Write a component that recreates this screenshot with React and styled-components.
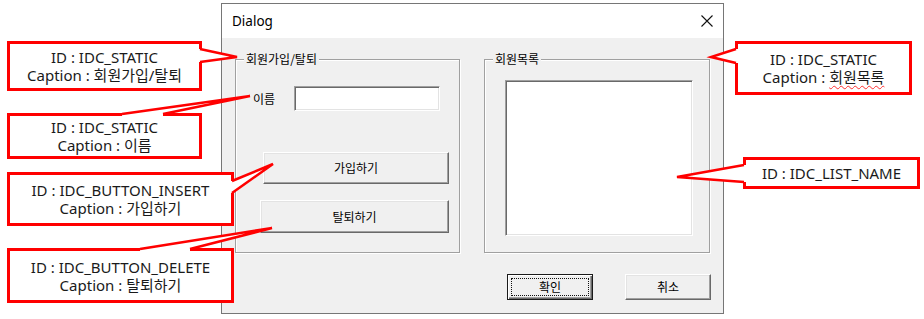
import React from "react";
import styled, { createGlobalStyle, css } from "styled-components";

const GlobalStyle = createGlobalStyle`
  html, body { margin: 0; padding: 0; background: #ffffff; }
  body { font-family: "Noto Sans", "Noto Sans CJK KR", sans-serif; }
`;

const Canvas = styled.div`
  position: relative;
  width: 924px;
  height: 319px;
  box-sizing: border-box;
  padding: 3px 0 0 221px;
  overflow: hidden;
`;

const Dialog = styled.div`
  width: 503px;
  height: 311px;
  box-sizing: border-box;
  border: 1px solid #767676;
  background: #f0f0f0;
  display: flex;
  flex-direction: column;
`;

const TitleBar = styled.div`
  height: 34px;
  flex: none;
  background: #ffffff;
  display: flex;
  align-items: center;
  justify-content: space-between;
  padding: 0 10px 0 10px;
  font-family: "Noto Sans", sans-serif;
  font-size: 13.5px;
  color: #000;
`;

const DialogBody = styled.div`
  padding: 21px 12px 0 13px;
  display: flex;
  flex-direction: column;
  font-family: "Noto Sans CJK KR", "Noto Sans", sans-serif;
  font-size: 12px;
  font-weight: 400;
  color: #000;
`;

const GroupRow = styled.div`
  display: flex;
  gap: 24px;
`;

const Group = styled.div`
  position: relative;
  box-sizing: border-box;
  width: ${(p) => p.$w}px;
  height: 194px;
  border: 1px solid #a0a0a0;
  box-shadow: 1px 1px 0 #ffffff, inset 1px 1px 0 #ffffff;
  display: flex;
  flex-direction: column;
  align-items: flex-start;
`;

const GroupCaption = styled.span`
  position: absolute;
  top: -9px;
  left: 8px;
  padding: 0 2px;
  background: #f0f0f0;
  line-height: 16px;
`;

const NameRow = styled.div`
  margin: 26px 0 0 17px;
  display: flex;
  align-items: center;
  gap: 19px;
`;

const Label = styled.span`
  line-height: 16px;
`;

const sunken = css`
  box-sizing: border-box;
  background: #ffffff;
  border: 1px solid;
  border-color: #a0a0a0 #ffffff #ffffff #a0a0a0;
  box-shadow: inset 1px 1px 0 #696969, inset -1px -1px 0 #e3e3e3;
`;

const EditBox = styled.div`
  ${sunken};
  width: 146px;
  height: 25px;
`;

const ListBox = styled.div`
  ${sunken};
  margin: 20px 0 0 20px;
  width: 188px;
  height: 156px;
`;

const Button = styled.div`
  position: relative;
  box-sizing: border-box;
  width: ${(p) => p.$w}px;
  height: ${(p) => p.$h}px;
  margin: ${(p) => p.$m || "0"};
  background: #f0f0f0;
  display: flex;
  align-items: center;
  justify-content: center;
  font-size: 12px;
  line-height: 16px;
  color: #000;
  border: 1px solid;
  border-color: #ffffff #696969 #696969 #ffffff;
  box-shadow: inset -1px -1px 0 #a0a0a0, inset 1px 1px 0 #e3e3e3;
  ${(p) =>
    p.$default &&
    css`
      border: 1px solid #1a1a1a;
      box-shadow: inset 1px 1px 0 #ffffff, inset -1px -1px 0 #696969,
        inset -2px -2px 0 #a0a0a0;
      &::after {
        content: "";
        position: absolute;
        inset: 3px;
        border: 1px dotted #111;
      }
    `}
`;

const ButtonRow = styled.div`
  margin-top: 21px;
  display: flex;
  justify-content: flex-end;
  gap: 32px;
`;

const Callout = styled.div`
  position: absolute;
  left: ${(p) => p.$x}px;
  top: ${(p) => p.$y}px;
  width: ${(p) => p.$w}px;
  height: ${(p) => p.$h}px;
  box-sizing: border-box;
  border: 3px solid #ff0000;
  background: #ffffff;
  display: flex;
  flex-direction: column;
  align-items: center;
  justify-content: center;
  font-family: "Noto Sans", "Noto Sans CJK KR", sans-serif;
  font-size: 15px;
  line-height: 18px;
  color: #1a1a1a;
  white-space: nowrap;
`;

const Line = styled.span`
  display: block;
  height: 18px;
`;

const Squiggle = styled.span`
  text-decoration: underline wavy #ff3030;
  text-decoration-thickness: 1px;
  text-underline-offset: 2px;
`;

const TailLayer = styled.svg`
  position: absolute;
  left: 0;
  top: 0;
  pointer-events: none;
`;

const tails = [
  { a: [200, 49], b: [200, 62], t: [237, 57], fa: [196, 49], fb: [196, 62] },
  { a: [122, 114], b: [163, 114], t: [250, 96], fa: [122, 118], fb: [163, 118] },
  { a: [232, 181], b: [232, 193], t: [273, 164], fa: [228, 181], fb: [228, 193] },
  { a: [140, 249], b: [190, 249], t: [272, 228], fa: [140, 253], fb: [190, 253] },
  { a: [736, 49], b: [736, 63], t: [711, 57], fa: [740, 49], fb: [740, 63] },
  { a: [744, 165], b: [744, 182], t: [677, 177], fa: [748, 165], fb: [748, 182] },
];

function Tails() {
  return (
    <TailLayer width="924" height="319" viewBox="0 0 924 319">
      {tails.map((s, i) => (
        <g key={i}>
          <polygon
            points={`${s.fa[0]},${s.fa[1]} ${s.a[0]},${s.a[1]} ${s.t[0]},${s.t[1]} ${s.b[0]},${s.b[1]} ${s.fb[0]},${s.fb[1]}`}
            fill="#ffffff"
          />
          <polyline
            points={`${s.a[0]},${s.a[1]} ${s.t[0]},${s.t[1]} ${s.b[0]},${s.b[1]}`}
            fill="none"
            stroke="#ff0000"
            strokeWidth="2.5"
            strokeLinejoin="miter"
          />
        </g>
      ))}
    </TailLayer>
  );
}

function CloseIcon() {
  return (
    <svg width="12" height="12" viewBox="0 0 12 12">
      <path d="M0.5 0.5 L11.5 11.5 M11.5 0.5 L0.5 11.5" stroke="#111" strokeWidth="1.1" fill="none" />
    </svg>
  );
}

export default function App() {
  return (
    <>
      <GlobalStyle />
      <Canvas>
        <Dialog>
          <TitleBar>
            <span>Dialog</span>
            <CloseIcon />
          </TitleBar>
          <DialogBody>
            <GroupRow>
              <Group $w={225}>
                <GroupCaption>회원가입/탈퇴</GroupCaption>
                <NameRow>
                  <Label>이름</Label>
                  <EditBox />
                </NameRow>
                <Button $w={186} $h={32} $m="41px 0 0 27px">가입하기</Button>
                <Button $w={189} $h={33} $m="16px 0 0 24px">탈퇴하기</Button>
              </Group>
              <Group $w={226}>
                <GroupCaption>회원목록</GroupCaption>
                <ListBox />
              </Group>
            </GroupRow>
            <ButtonRow>
              <Button $w={86} $h={26} $default>확인</Button>
              <Button $w={86} $h={26}>취소</Button>
            </ButtonRow>
          </DialogBody>
        </Dialog>

        <Callout $x={7} $y={41} $w={195} $h={50}>
          <Line>ID : IDC_STATIC</Line>
          <Line>Caption : 회원가입/탈퇴</Line>
        </Callout>
        <Callout $x={7} $y={113} $w={195} $h={46}>
          <Line>ID : IDC_STATIC</Line>
          <Line>Caption : 이름</Line>
        </Callout>
        <Callout $x={7} $y={172} $w={227} $h={54}>
          <Line>ID : IDC_BUTTON_INSERT</Line>
          <Line>Caption : 가입하기</Line>
        </Callout>
        <Callout $x={7} $y={248} $w={227} $h={55}>
          <Line>ID : IDC_BUTTON_DELETE</Line>
          <Line>Caption : 탈퇴하기</Line>
        </Callout>
        <Callout $x={735} $y={41} $w={177} $h={54}>
          <Line>ID : IDC_STATIC</Line>
          <Line>
            Caption : <Squiggle>회원목록</Squiggle>
          </Line>
        </Callout>
        <Callout $x={743} $y={157} $w={177} $h={32}>
          <Line>ID : IDC_LIST_NAME</Line>
        </Callout>
        <Tails />
      </Canvas>
    </>
  );
}
